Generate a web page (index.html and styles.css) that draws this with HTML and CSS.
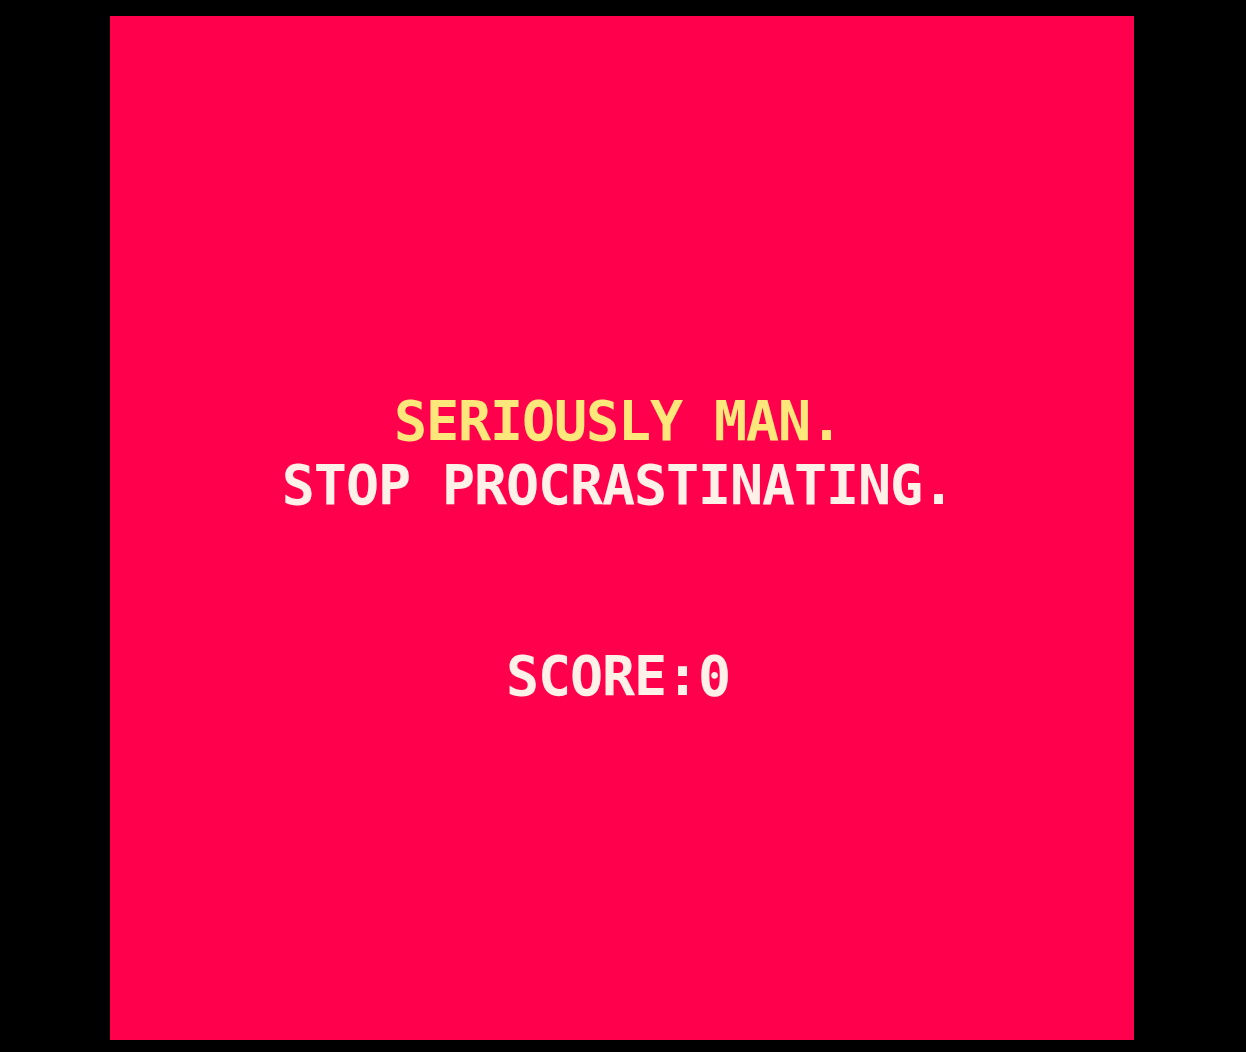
FILE: index.html
```html
<!DOCTYPE html>
<html>
<head>
<meta charset="utf-8">
<link rel="stylesheet" href="styles.css">
</head>
<body>
<main class="screen">
  <div class="msg">
    <p class="line yellow">SERIOUSLY MAN.</p>
    <p class="line white">STOP PROCRASTINATING.</p>
  </div>
  <p class="line white score">SCORE:0</p>
</main>
</body>
</html>
```
FILE: styles.css
```css
html, body {
  margin: 0;
  padding: 0;
  background: #000;
  height: 100%;
}
body {
  display: flex;
  justify-content: center;
  align-items: flex-start;
  padding-top: 16px;
  box-sizing: border-box;
  overflow: hidden;
}
.screen {
  width: 1024px;
  height: 1024px;
  margin-left: -2px;
  background: #ff004d;
  box-sizing: border-box;
  padding-top: 385px;
  display: flex;
  flex-direction: column;
  align-items: center;
}
.msg {
  display: flex;
  flex-direction: column;
  gap: 24px;
  align-items: center;
}
.line {
  margin: 0;
  height: 40px;
  line-height: 40px;
  font-family: "DejaVu Sans Mono", "Liberation Mono", monospace;
  font-weight: bold;
  font-size: 55px;
  letter-spacing: -1.1px;
  white-space: pre;
  padding-right: 8px;
}
.yellow { color: #fde77a; }
.white { color: #fff1e8; }
.score { margin-top: 151px; }
```
